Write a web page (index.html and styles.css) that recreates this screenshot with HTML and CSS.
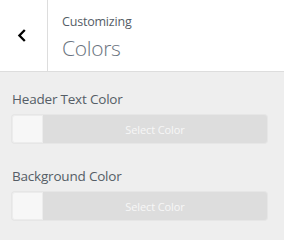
FILE: index.html
```html
<!DOCTYPE html>
<html>
<head>
<meta charset="utf-8">
<link rel="stylesheet" href="styles.css">
</head>
<body>
<div class="header">
  <button class="back" aria-label="Back">
    <svg width="10" height="13" viewBox="0 0 10 13"><path d="M7.8 1 L2.4 6.5 L7.8 12" fill="none" stroke="#000" stroke-width="2.3"/></svg>
  </button>
  <div class="titles">
    <div class="action">Customizing</div>
    <div class="title">Colors</div>
  </div>
</div>
<div class="controls">
  <div class="control">
    <div class="label">Header Text Color</div>
    <div class="picker"><span class="swatch"></span><span class="select">Select Color</span></div>
  </div>
  <div class="control">
    <div class="label">Background Color</div>
    <div class="picker"><span class="swatch"></span><span class="select">Select Color</span></div>
  </div>
</div>
</body>
</html>
```
FILE: styles.css
```css
html, body { margin: 0; padding: 0; }
body {
  width: 284px;
  height: 240px;
  background: #eeeeee;
  font-family: "Open Sans", "Noto Sans", sans-serif;
  overflow: hidden;
}
.header {
  display: flex;
  height: 71px;
  background: #fff;
  border-bottom: 1px solid #dddddd;
}
.back {
  width: 48px;
  padding: 0;
  margin: 0;
  border: 0;
  border-right: 1px solid #dddddd;
  background: #fff;
  display: flex;
  align-items: center;
  justify-content: center;
  box-sizing: border-box;
}
.back svg { display: block; margin-bottom: 1px; margin-right: 3px; }
.titles {
  padding: 13px 0 0 14px;
  color: #555d66;
}
.action {
  font-size: 12.5px;
  line-height: 18px;
  letter-spacing: -0.2px;
}
.title {
  font-size: 21px;
  font-weight: 300;
  line-height: 28px;
  margin-top: 3px;
  color: #6b7480;
  letter-spacing: -0.3px;
}
.controls { padding: 17px 17px 0 12px; }
.control { margin-bottom: 23px; }
.label {
  font-size: 13.5px;
  line-height: 20px;
  color: #555d66;
  letter-spacing: -0.2px;
}
.picker {
  margin-top: 6px;
  display: flex;
  height: 28px;
  background: #dddddd;
  border-radius: 3px;
  box-shadow: 0 0 0 1px #e6e6e6;
  overflow: hidden;
}
.swatch {
  width: 31px;
  background: #f7f7f7;
  border-radius: 3px 0 0 3px;
  box-shadow: inset 0 0 0 1px #ececec;
}
.select {
  flex: 1;
  display: flex;
  align-items: center;
  justify-content: center;
  color: #f7f7f7;
  font-size: 11px;
  letter-spacing: -0.1px;
}
```
